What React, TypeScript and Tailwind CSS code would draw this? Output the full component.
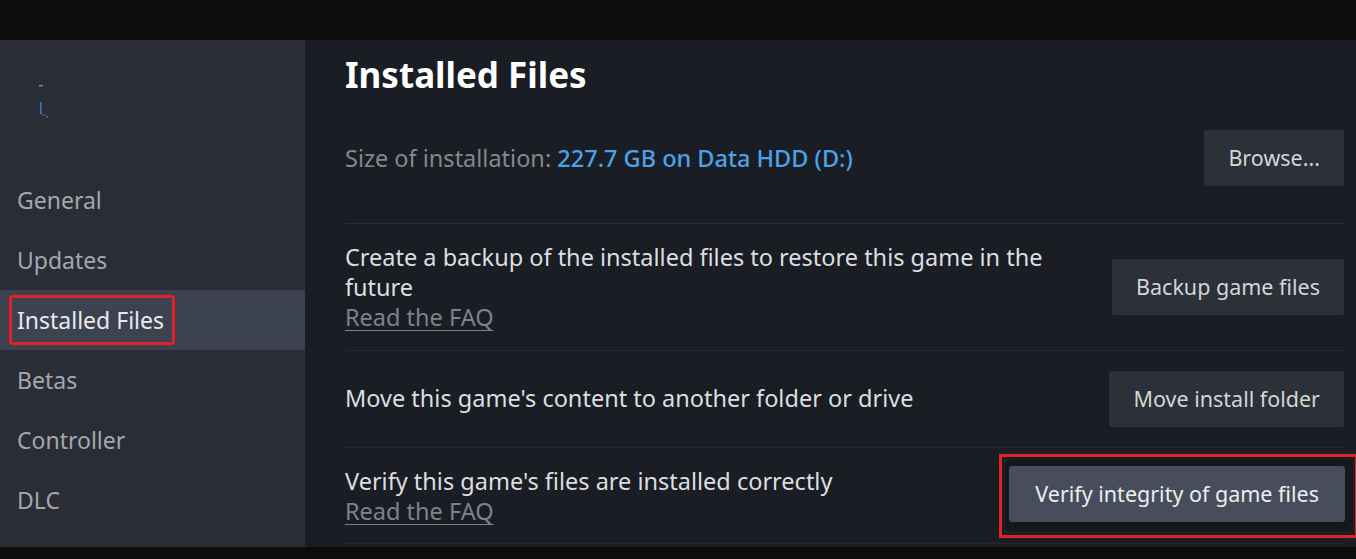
import React from "react";

const font = { fontFamily: '"Noto Sans", "Open Sans", Arial, sans-serif' };

const navItems = ["General", "Updates", "Installed Files", "Betas", "Controller", "DLC"];

const SteamButton: React.FC<{ label: string; active?: boolean }> = ({ label, active }) => (
  <button
    className={`h-[56px] rounded-[3px] text-[21.5px] whitespace-nowrap ${
      active ? "bg-[#474d5a] text-[#eceef0] px-[26px]" : "bg-[#2c3039] text-[#d3d5d8] px-[24px]"
    }`}
  >
    {label}
  </button>
);

const FaqLink = () => (
  <a className="block text-[#7c828b] underline underline-offset-[4px] decoration-[1px]">Read the FAQ</a>
);

export default function App() {
  return (
    <div className="w-[1356px] h-[559px] bg-[#0c0c0d] flex flex-col overflow-hidden" style={font}>
      {/* top bar */}
      <div className="h-[40px] shrink-0 bg-[#0c0c0d]" />

      <div className="flex h-[507px] shrink-0">
        {/* sidebar */}
        <div className="w-[305px] shrink-0 bg-[#2a2d35] flex flex-col">
          <div className="h-[130px] pt-[44px] pl-[36px]">
            <svg width="14" height="36" viewBox="0 0 14 36">
              <rect x="3" y="1" width="4" height="1.5" fill="#5f8fc4" />
              <rect x="4" y="18" width="1.5" height="12" fill="#3e78c0" />
              <rect x="5.5" y="30" width="4" height="1.5" fill="#2f5a90" />
              <rect x="10" y="32" width="1.5" height="1.5" fill="#5f8fc4" />
            </svg>
          </div>
          {navItems.map((item) => {
            const active = item === "Installed Files";
            return (
              <div
                key={item}
                className={`h-[60px] flex items-center text-[23px] ${
                  active ? "bg-[#3d4250] pl-[9px] text-[#e8eaec]" : "pl-[17px] text-[#a3a7ad]"
                }`}
              >
                {active ? (
                  <span className="h-[50px] flex items-center border-[3px] border-[#e1202a] rounded-[2px] pl-[5px] pr-[8px]">
                    {item}
                  </span>
                ) : (
                  item
                )}
              </div>
            );
          })}
        </div>

        {/* main panel */}
        <div className="flex-1 bg-[#1a1d24] pl-[40px] pr-[12px] flex flex-col text-[23.5px] text-[#dcdee0]">
          <div className="h-[68px] flex items-center">
            <h1 className="text-[35px] font-bold text-white leading-none">Installed Files</h1>
          </div>

          <div className="flex items-center justify-between pt-[22px] pb-[37px] border-b border-[#2b2f37]">
            <div className="leading-[30px]">
              <span className="text-[#82888f]">Size of installation: </span>
              <span className="text-[#4aa3ea] font-medium">227.7 GB on Data HDD (D:)</span>
            </div>
            <SteamButton label="Browse..." />
          </div>

          <div className="flex items-center justify-between h-[127px] leading-[30px] border-b border-[#24282f]">
            <div className="max-w-[720px]">
              <div>Create a backup of the installed files to restore this game in the future</div>
              <FaqLink />
            </div>
            <SteamButton label="Backup game files" />
          </div>

          <div className="flex items-center justify-between h-[97px] border-b border-[#24282f]">
            <div>Move this game's content to another folder or drive</div>
            <SteamButton label="Move install folder" />
          </div>

          <div className="flex items-center justify-between h-[96px] leading-[30px] border-b border-[#24282f]">
            <div>
              <div>Verify this game's files are installed correctly</div>
              <FaqLink />
            </div>
            <div className="-mr-[14px] border-[3px] border-[#e1202a] pl-[3px] pr-[2px] pt-[3px] pb-[4px]">
              <div className="bg-[#14171c] rounded-[6px] pl-[4px] pr-[8px] pt-[6px] pb-[9px]">
                <SteamButton label="Verify integrity of game files" active />
              </div>
            </div>
          </div>
        </div>
      </div>

      <div className="flex-1 bg-[#0c0c0d]" />
    </div>
  );
}
